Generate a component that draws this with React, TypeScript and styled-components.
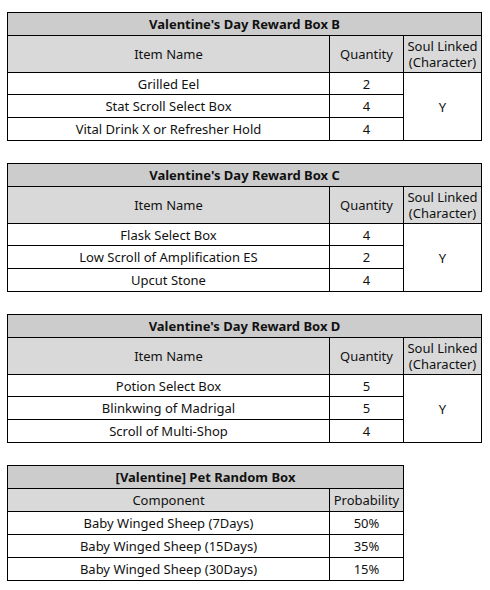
import styled, { createGlobalStyle } from 'styled-components';

type Item = { name: string; qty: string };

const rewardBoxes: { title: string; items: Item[] }[] = [
  {
    title: "Valentine's Day Reward Box B",
    items: [
      { name: 'Grilled Eel', qty: '2' },
      { name: 'Stat Scroll Select Box', qty: '4' },
      { name: 'Vital Drink X or Refresher Hold', qty: '4' },
    ],
  },
  {
    title: "Valentine's Day Reward Box C",
    items: [
      { name: 'Flask Select Box', qty: '4' },
      { name: 'Low Scroll of Amplification ES', qty: '2' },
      { name: 'Upcut Stone', qty: '4' },
    ],
  },
  {
    title: "Valentine's Day Reward Box D",
    items: [
      { name: 'Potion Select Box', qty: '5' },
      { name: 'Blinkwing of Madrigal', qty: '5' },
      { name: 'Scroll of Multi-Shop', qty: '4' },
    ],
  },
];

const petBox = [
  { name: 'Baby Winged Sheep (7Days)', chance: '50%' },
  { name: 'Baby Winged Sheep (15Days)', chance: '35%' },
  { name: 'Baby Winged Sheep (30Days)', chance: '15%' },
];

export default function App() {
  return (
    <>
      <GlobalStyle />
      <Page>
        {rewardBoxes.map((box) => (
          <Table key={box.title} $width={474}>
            <colgroup>
              <col style={{ width: 322 }} />
              <col style={{ width: 74 }} />
              <col style={{ width: 78 }} />
            </colgroup>
            <tbody>
              <tr>
                <TitleCell colSpan={3}>{box.title}</TitleCell>
              </tr>
              <tr>
                <HeadCell $tall>Item Name</HeadCell>
                <HeadCell $tall>Quantity</HeadCell>
                <HeadCell $tall>
                  <Line>Soul Linked</Line>
                  <Line>(Character)</Line>
                </HeadCell>
              </tr>
              {box.items.map((item, i) => (
                <tr key={item.name}>
                  <Cell $h={i === 0 ? 21 : 22}>{item.name}</Cell>
                  <Cell $h={i === 0 ? 21 : 22}>{item.qty}</Cell>
                  {i === 0 && <Cell rowSpan={box.items.length}>Y</Cell>}
                </tr>
              ))}
            </tbody>
          </Table>
        ))}

        <Table $width={396}>
          <colgroup>
            <col style={{ width: 322 }} />
            <col style={{ width: 74 }} />
          </colgroup>
          <tbody>
            <tr>
              <TitleCell colSpan={2}>[Valentine] Pet Random Box</TitleCell>
            </tr>
            <tr>
              <HeadCell>Component</HeadCell>
              <HeadCell>Probability</HeadCell>
            </tr>
            {petBox.map((row) => (
              <tr key={row.name}>
                <Cell>{row.name}</Cell>
                <Cell>{row.chance}</Cell>
              </tr>
            ))}
          </tbody>
        </Table>
      </Page>
    </>
  );
}

const GlobalStyle = createGlobalStyle`
  body {
    margin: 0;
    background: #fff;
    font-family: "Noto Sans", "Open Sans", sans-serif;
    color: #111;
  }
`;

const Page = styled.div`
  display: flex;
  flex-direction: column;
  align-items: flex-start;
  gap: 22px;
  padding: 12px 0 0 7px;
`;

const Table = styled.table<{ $width: number }>`
  width: ${({ $width }) => $width}px;
  table-layout: fixed;
  border-collapse: collapse;
  font-size: 13px;
  line-height: 16px;

  td {
    border: 1px solid #000;
    padding: 0;
    text-align: center;
    vertical-align: middle;
  }
`;

const TitleCell = styled.td`
  height: 22px;
  background: #cccccc;
  font-weight: 700;
`;

const HeadCell = styled.td<{ $tall?: boolean }>`
  height: ${({ $tall }) => ($tall ? 36 : 22)}px;
  background: #d9d9d9;
`;

const Line = styled.span`
  display: block;
  height: 16px;
`;

const Cell = styled.td<{ $h?: number }>`
  height: ${({ $h = 22 }) => $h}px;
  background: #fff;
`;
